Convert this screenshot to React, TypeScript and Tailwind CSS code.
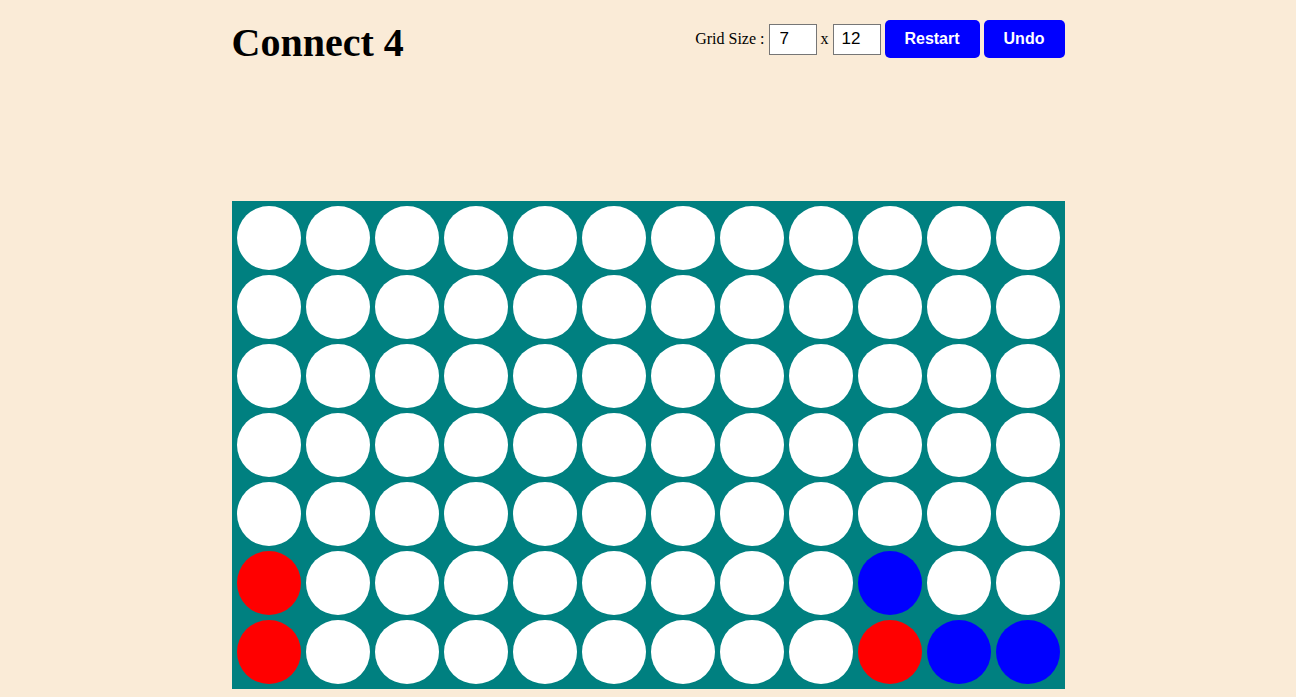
const ROWS = 7;
const COLS = 12;

// board state, bottom rows only have pieces
const pieces: Record<string, "red" | "blue"> = {
  "5-0": "red",
  "5-9": "blue",
  "6-0": "red",
  "6-9": "red",
  "6-10": "blue",
  "6-11": "blue",
};

function Cell({ piece }: { piece?: "red" | "blue" }) {
  const color =
    piece === "red" ? "bg-[#ff0000]" : piece === "blue" ? "bg-[#0000ff]" : "bg-white";
  return <div className={`w-[64px] h-[64px] rounded-full ${color}`} />;
}

export default function App() {
  const cells = [];
  for (let r = 0; r < ROWS; r++) {
    for (let c = 0; c < COLS; c++) {
      cells.push(<Cell key={`${r}-${c}`} piece={pieces[`${r}-${c}`]} />);
    }
  }

  return (
    <div className="min-h-[697px] bg-[#faebd7] font-['Liberation_Serif',serif] text-black">
      <div className="w-[833px] mx-auto pt-[19px]">
        {/* Header */}
        <div className="flex justify-between items-start">
          <h1 className="text-[40px] leading-[48px] font-bold">Connect 4</h1>
          <div className="flex items-center gap-[4px] mt-[1px] text-[16px]">
            <span>Grid Size :</span>
            <input
              className="w-[48px] h-[31px] bg-white border border-[#767676] px-[10px] font-['Liberation_Sans',sans-serif] text-[17px]"
              defaultValue="7"
            />
            <span>x</span>
            <input
              className="w-[48px] h-[31px] bg-white border border-[#767676] px-[8px] font-['Liberation_Sans',sans-serif] text-[17px]"
              defaultValue="12"
            />
            <button className="w-[95px] h-[38px] rounded-[5px] bg-[#0000ff] text-white font-bold font-['Liberation_Sans',sans-serif] text-[16px]">
              Restart
            </button>
            <button className="w-[81px] h-[38px] rounded-[5px] bg-[#0000ff] text-white font-bold font-['Liberation_Sans',sans-serif] text-[16px]">
              Undo
            </button>
          </div>
        </div>

        {/* Board */}
        <div className="mt-[134px] bg-[#008080] p-[5px] grid grid-cols-12 gap-[5px]">
          {cells}
        </div>
      </div>
    </div>
  );
}
